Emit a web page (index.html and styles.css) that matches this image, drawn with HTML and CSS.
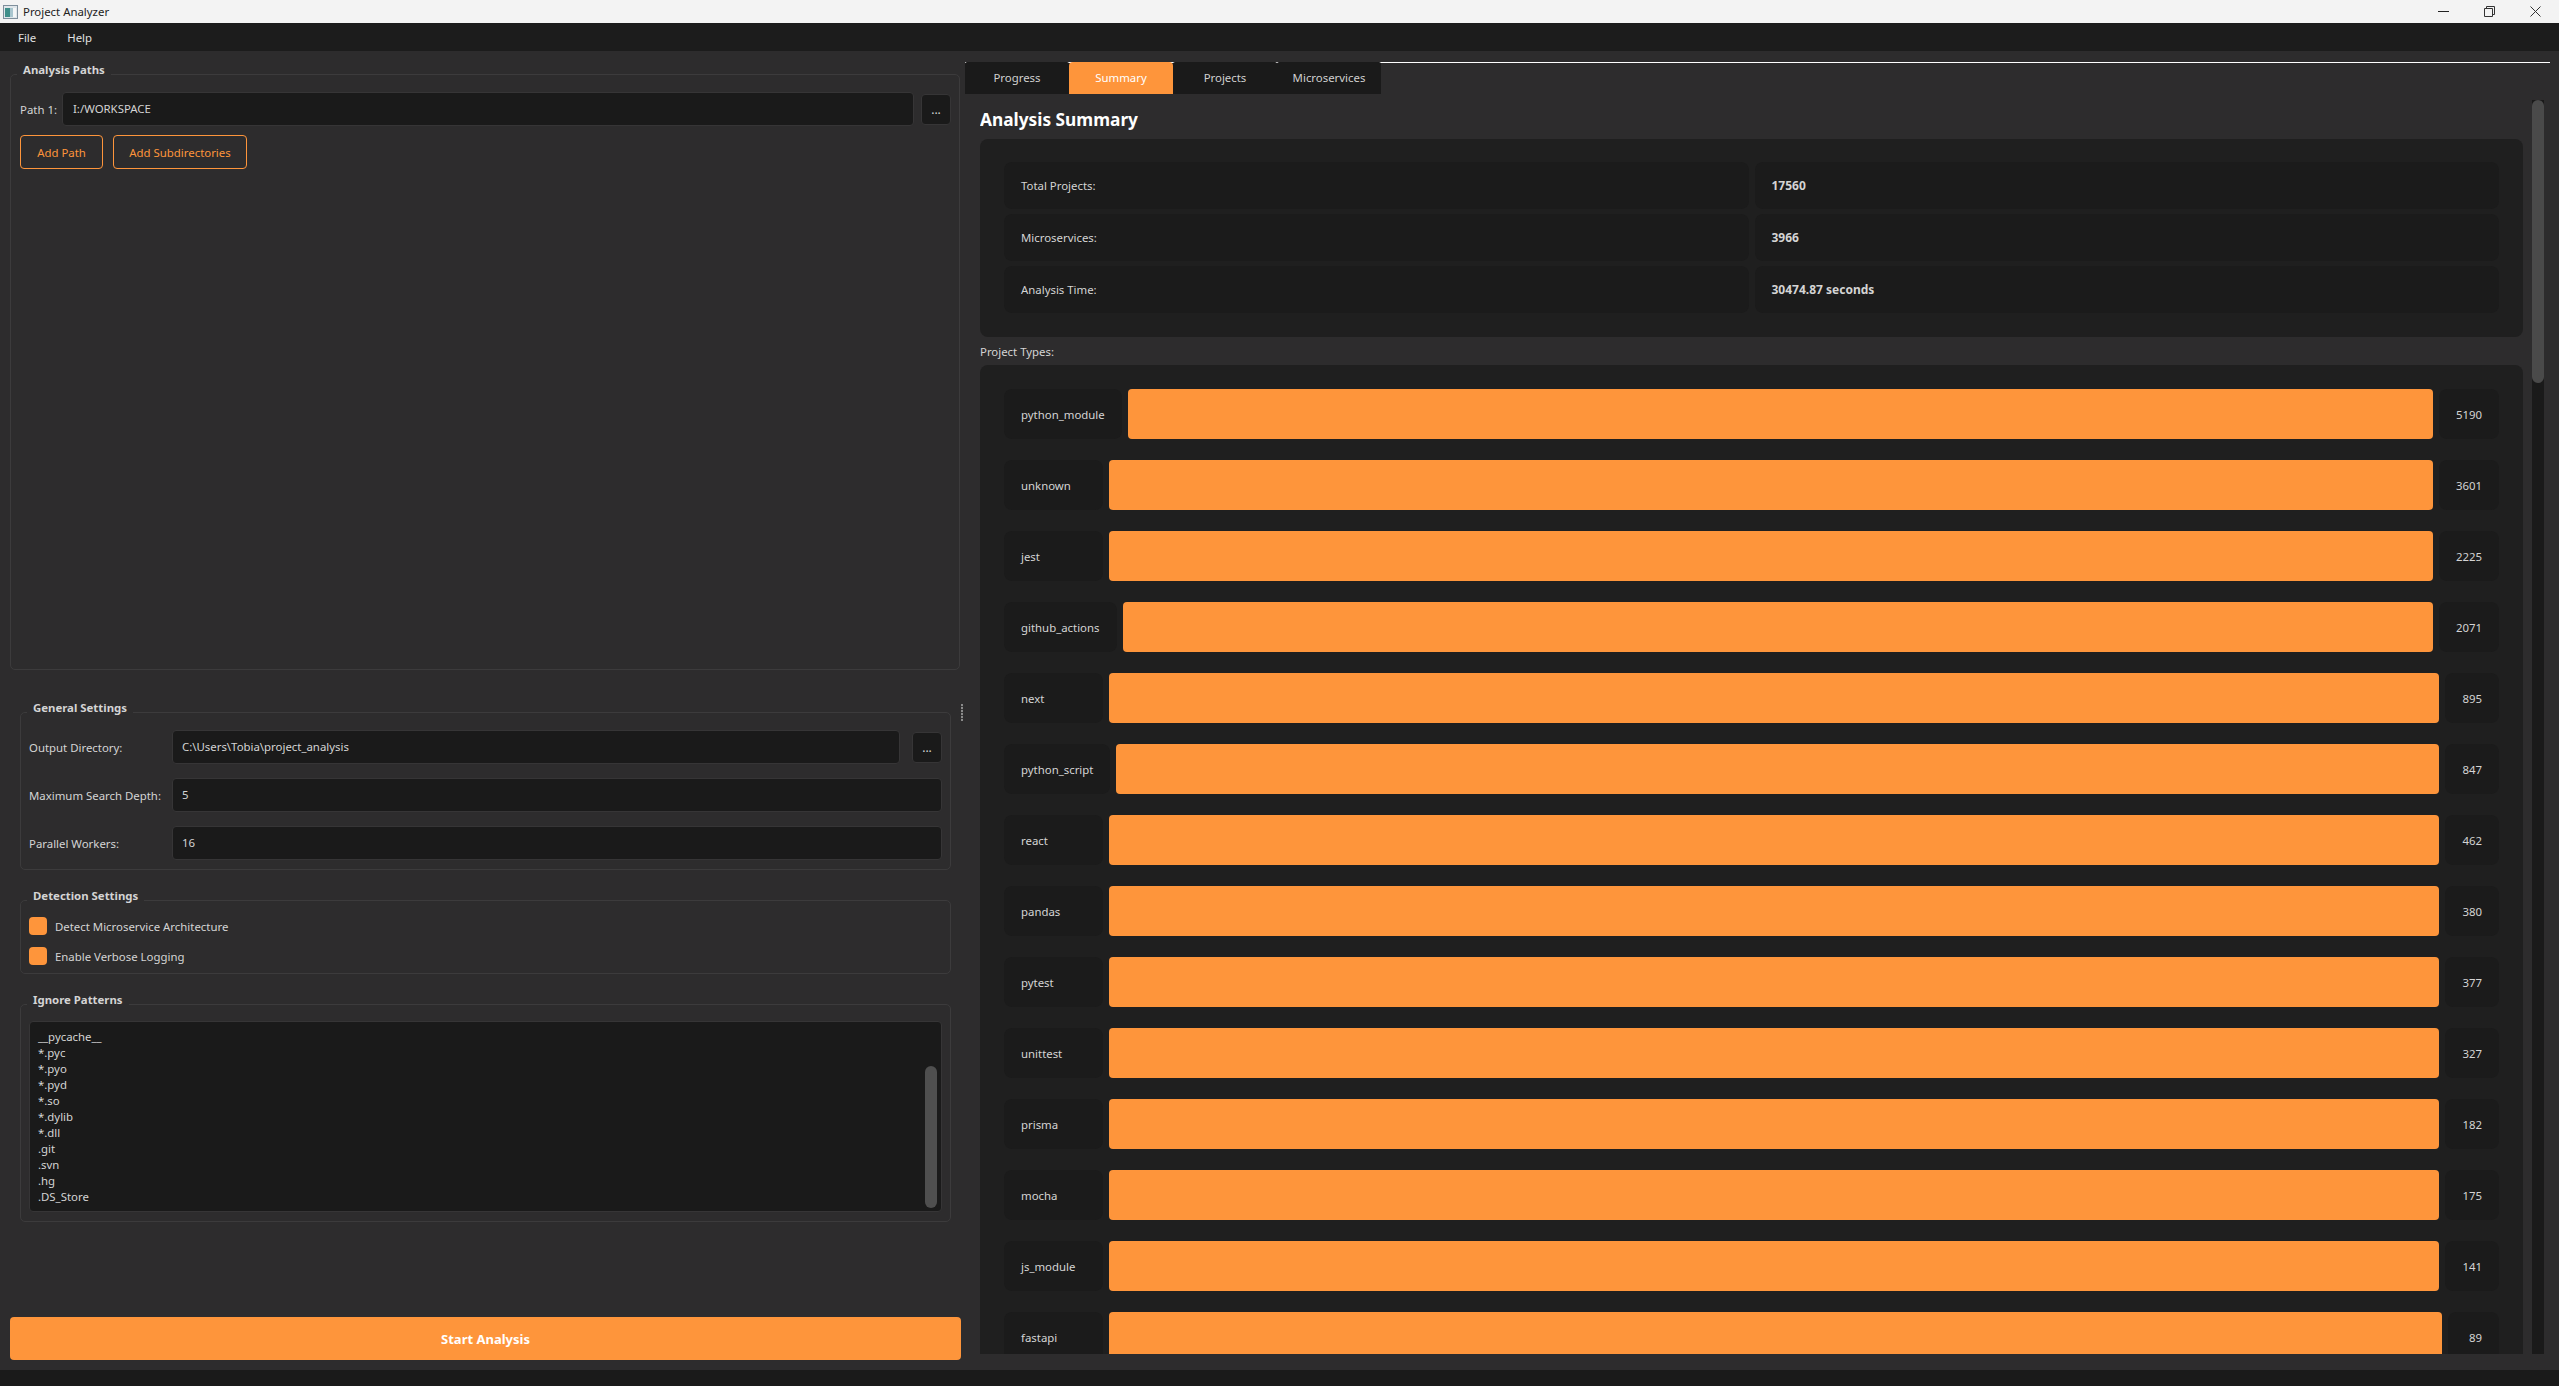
FILE: index.html
```html
<!DOCTYPE html>
<html lang="en">
<head>
    <meta charset="UTF-8">
    <title>Project Analyzer</title>
    <link rel="stylesheet" href="styles.css">
</head>
<body>
    <div class="titlebar">
        <svg class="app-icon" width="15" height="14" viewBox="0 0 15 14">
            <rect x="0.5" y="0.5" width="14" height="13" fill="#dfe6ea" stroke="#7f8f9c"/>
            <rect x="2" y="3" width="5" height="9" fill="#3f8f8a"/>
            <rect x="7" y="3" width="3" height="9" fill="#a9c6cf"/>
            <rect x="10" y="3" width="3" height="9" fill="#f4f6f7"/>
        </svg>
        <span class="app-title">Project Analyzer</span>
        <div class="win-controls">
            <svg width="11" height="11" viewBox="0 0 11 11"><path d="M0 5.5H11" stroke="#222"/></svg>
            <svg width="11" height="11" viewBox="0 0 11 11" fill="none"><path d="M0.5 2.5h8v8h-8zM2.5 2.5V0.5h8v8h-2" stroke="#333"/></svg>
            <svg width="11" height="11" viewBox="0 0 11 11"><path d="M0.5 0.5L10.5 10.5M10.5 0.5L0.5 10.5" stroke="#333"/></svg>
        </div>
    </div>

    <div class="menubar">
        <span>File</span>
        <span>Help</span>
    </div>

    <div class="main">
        <div class="left">
            <fieldset class="group paths-group">
                <legend>Analysis Paths</legend>
                <div class="path-row">
                    <span class="path-label">Path 1:</span>
                    <div class="field">I:/WORKSPACE</div>
                    <button class="browse">...</button>
                </div>
                <div class="path-buttons">
                    <button class="outline add-path">Add Path</button>
                    <button class="outline add-sub">Add Subdirectories</button>
                </div>
            </fieldset>

            <div class="settings">
                <fieldset class="group">
                    <legend>General Settings</legend>
                    <div class="form-grid">
                        <span>Output Directory:</span>
                        <div class="field-row">
                            <div class="field">C:\Users\Tobia\project_analysis</div>
                            <button class="browse">...</button>
                        </div>
                        <span>Maximum Search Depth:</span>
                        <div class="field">5</div>
                        <span>Parallel Workers:</span>
                        <div class="field">16</div>
                    </div>
                </fieldset>

                <fieldset class="group">
                    <legend>Detection Settings</legend>
                    <div class="checks">
                        <label class="check"><i></i>Detect Microservice Architecture</label>
                        <label class="check"><i></i>Enable Verbose Logging</label>
                    </div>
                </fieldset>

                <fieldset class="group">
                    <legend>Ignore Patterns</legend>
                    <div class="patterns-wrap">
                        <div class="patterns">__pycache__
*.pyc
*.pyo
*.pyd
*.so
*.dylib
*.dll
.git
.svn
.hg
.DS_Store</div>
                        <div class="patterns-thumb"></div>
                    </div>
                </fieldset>
            </div>

            <button class="start">Start Analysis</button>
        </div>

        <div class="splitter"><div class="grip"></div></div>

        <div class="right">
            <div class="tabs">
                <div class="tab">Progress</div>
                <div class="tab active">Summary</div>
                <div class="tab">Projects</div>
                <div class="tab">Microservices</div>
            </div>

            <div class="pane">
                <div class="content">
                    <h2>Analysis Summary</h2>
                    <div class="panel stats">
                        <div class="cell">Total Projects:</div>
                        <div class="cell strong">17560</div>
                        <div class="cell">Microservices:</div>
                        <div class="cell strong">3966</div>
                        <div class="cell">Analysis Time:</div>
                        <div class="cell strong">30474.87 seconds</div>
                    </div>

                    <div class="types-label">Project Types:</div>
                    <div class="panel types">
                        <div class="type-row"><div class="cell name">python_module</div><div class="bar"></div><div class="cell num">5190</div></div>
                        <div class="type-row"><div class="cell name">unknown</div><div class="bar"></div><div class="cell num">3601</div></div>
                        <div class="type-row"><div class="cell name">jest</div><div class="bar"></div><div class="cell num">2225</div></div>
                        <div class="type-row"><div class="cell name">github_actions</div><div class="bar"></div><div class="cell num">2071</div></div>
                        <div class="type-row"><div class="cell name">next</div><div class="bar"></div><div class="cell num">895</div></div>
                        <div class="type-row"><div class="cell name">python_script</div><div class="bar"></div><div class="cell num">847</div></div>
                        <div class="type-row"><div class="cell name">react</div><div class="bar"></div><div class="cell num">462</div></div>
                        <div class="type-row"><div class="cell name">pandas</div><div class="bar"></div><div class="cell num">380</div></div>
                        <div class="type-row"><div class="cell name">pytest</div><div class="bar"></div><div class="cell num">377</div></div>
                        <div class="type-row"><div class="cell name">unittest</div><div class="bar"></div><div class="cell num">327</div></div>
                        <div class="type-row"><div class="cell name">prisma</div><div class="bar"></div><div class="cell num">182</div></div>
                        <div class="type-row"><div class="cell name">mocha</div><div class="bar"></div><div class="cell num">175</div></div>
                        <div class="type-row"><div class="cell name">js_module</div><div class="bar"></div><div class="cell num">141</div></div>
                        <div class="type-row"><div class="cell name">fastapi</div><div class="bar"></div><div class="cell num">89</div></div>
                    </div>
                </div>
                <div class="scrollbar"><div class="scroll-thumb"></div></div>
            </div>
        </div>
    </div>

    <div class="statusbar"></div>
</body>
</html>
```

FILE: styles.css
```css
* {
    margin: 0;
    padding: 0;
    box-sizing: border-box;
    font-family: 'Noto Sans', sans-serif;
}

body {
    width: 2559px;
    height: 1386px;
    margin: 0;
    display: flex;
    flex-direction: column;
    overflow: hidden;
    background-color: #2d2c2d;
    color: #d4d4d4;
    font-size: 11.4px;
}

.titlebar {
    height: 23px;
    flex: none;
    display: flex;
    align-items: center;
    background-color: #f3f3f3;
    color: #222;
    padding-left: 3px;
}

.app-title {
    margin-left: 5px;
}

.win-controls {
    margin-left: auto;
    display: flex;
    gap: 35px;
    padding-right: 18px;
}

.menubar {
    height: 28px;
    flex: none;
    display: flex;
    align-items: center;
    gap: 31px;
    padding-left: 18px;
    background-color: #1c1c1c;
    color: #e0e0e0;
}

.main {
    flex: 1;
    min-height: 0;
    display: flex;
}

.statusbar {
    height: 16px;
    flex: none;
    background-color: #1a1a1a;
}

/* left side */
.left {
    width: 961px;
    flex: none;
    display: flex;
    flex-direction: column;
    padding: 12px 0 10px 10px;
}

.group {
    border: 1px solid #3c3b3c;
    border-radius: 5px;
    min-width: 0;
}

.group legend {
    margin-left: 6px;
    padding: 0 6px;
    height: 22px;
    line-height: 13px;
    font-weight: 700;
    color: #d4d4d4;
}

.paths-group {
    flex: 1;
    width: 950px;
    padding: 7px 8px 0 9px;
}

.paths-group legend {
    margin-left: -3px;
}

.paths-group .field {
    padding: 0 10px;
}

.field {
    flex: 1;
    height: 34px;
    line-height: 32px;
    padding: 0 9px;
    background-color: #1a1a1a;
    border: 1px solid #363536;
    border-radius: 4px;
    color: #d4d4d4;
}

.path-row {
    display: flex;
    align-items: center;
    gap: 7px;
}

.path-label {
    width: 35px;
    flex: none;
    white-space: nowrap;
}

.browse {
    width: 30px;
    height: 31px;
    flex: none;
    background-color: #1a1a1a;
    border: 1px solid #363536;
    border-radius: 4px;
    color: #d4d4d4;
    font-size: 12px;
}

.path-buttons {
    display: flex;
    gap: 10px;
    margin-top: 9px;
}

.outline {
    height: 34px;
    background-color: transparent;
    border: 1px solid #fe953b;
    border-radius: 4px;
    color: #fe953b;
    font-size: 11.4px;
}

.add-path {
    width: 83px;
}

.add-sub {
    width: 134px;
}

.settings {
    margin: 31px 10px 95px;
    display: flex;
    flex-direction: column;
    gap: 19px;
}

.form-grid {
    display: grid;
    grid-template-columns: 143px 1fr;
    row-gap: 14px;
    align-items: center;
    padding: 7px 8px 9px;
}

.field-row {
    display: flex;
    align-items: center;
    gap: 12px;
}

.checks {
    display: flex;
    flex-direction: column;
    gap: 12px;
    padding: 6px 8px 8px;
}

.check {
    display: flex;
    align-items: center;
    gap: 8px;
    height: 18px;
}

.check i {
    width: 18px;
    height: 18px;
    background-color: #fe953b;
    border-radius: 4px;
}

.patterns-wrap {
    position: relative;
    margin: 6px 8px 9px;
    height: 191px;
    background-color: #1a1a1a;
    border: 1px solid #363536;
    border-radius: 4px;
}

.patterns {
    padding: 7px 8px;
    white-space: pre-line;
    line-height: 16px;
}

.patterns-thumb {
    position: absolute;
    right: 4px;
    top: 44px;
    bottom: 3px;
    width: 12px;
    background-color: #4f4f4f;
    border-radius: 6px;
}

.start {
    height: 43px;
    flex: none;
    width: 951px;
    background-color: #fe953b;
    border: none;
    border-radius: 4px;
    color: #fff;
    font-size: 13px;
    font-weight: 700;
}

.splitter {
    width: 4px;
    flex: none;
    display: flex;
    align-items: center;
    padding-top: 4px;
}

.grip {
    width: 2px;
    height: 17px;
    background-image: repeating-linear-gradient(#8a8a8a 0 2px, #3a3a3a 2px 3px);
}

/* right side */
.right {
    flex: 1;
    min-width: 0;
    display: flex;
    flex-direction: column;
}

.tabs {
    display: flex;
    margin: 11px 9px 0 0;
    border-top: 1px solid #fff;
}

.tab {
    width: 104px;
    height: 32px;
    margin-top: -1px;
    line-height: 32px;
    text-align: center;
    background-color: #1a1a1a;
    border-radius: 2px 2px 0 0;
    color: #d0d0d0;
}

.tab.active {
    background-color: #fe953b;
    color: #fff;
    border-radius: 4px 4px 0 0;
}

.pane {
    flex: 1;
    min-height: 0;
    display: flex;
    gap: 9px;
    padding: 6px 15px 16px 15px;
}

.content {
    flex: 1;
    min-width: 0;
    overflow: hidden;
}

.content h2 {
    font-size: 17.3px;
    font-weight: 700;
    line-height: 24px;
    margin-top: 8px;
    margin-bottom: 7px;
    color: #fff;
}

.panel {
    background-color: #1f1f1f;
    border-radius: 8px;
    padding: 23px 24px 24px;
}

.cell {
    background-color: #1b1b1b;
    border-radius: 8px;
    padding: 0 17px;
    display: flex;
    align-items: center;
}

.strong {
    font-size: 12px;
    font-weight: 700;
}

.stats {
    display: grid;
    grid-template-columns: 1fr 1fr;
    grid-auto-rows: 47px;
    gap: 5px 6px;
}

.types-label {
    margin-top: 7px;
    height: 16px;
    line-height: 16px;
}

.types {
    margin-top: 5px;
    padding-top: 24px;
    display: flex;
    flex-direction: column;
    gap: 21px;
}

.type-row {
    display: flex;
    gap: 6px;
    height: 50px;
}

.name {
    min-width: 99px;
}

.bar {
    flex: 1;
    background-color: #fe953b;
    border-radius: 4px;
}

.num {
    min-width: 51px;
    justify-content: flex-end;
}

.scrollbar {
    width: 12px;
    flex: none;
    background-color: #1a1a1a;
}

.scroll-thumb {
    height: 283px;
    background-color: #4a4a4a;
    border-radius: 6px;
}
```
